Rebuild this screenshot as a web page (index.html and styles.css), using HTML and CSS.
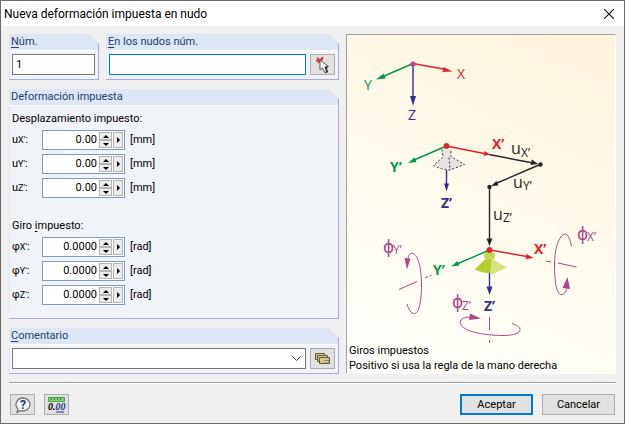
FILE: index.html
```html
<!DOCTYPE html>
<html lang="es">
<head>
    <meta charset="UTF-8">
    <meta name="viewport" content="width=device-width, initial-scale=1.0">
    <title>Nueva deformación impuesta en nudo</title>
    <link rel="stylesheet" href="styles.css">
</head>
<body>
    <header class="titlebar">
        <h1>Nueva deformación impuesta en nudo</h1>
        <button class="close-button" type="button" aria-label="Cerrar">
            <svg width="10" height="10" viewBox="0 0 10 10"><path d="M0 0L10 10M10 0L0 10" stroke="#111" stroke-width="1.1"/></svg>
        </button>
    </header>

    <form class="dialog">
        <main class="content">
            <div class="left">
                <div class="top-row">
                    <section class="group group-num">
                        <label class="group-title" for="num"><u>N</u>úm.</label>
                        <div class="group-body field-row">
                            <input class="text-input" type="text" id="num" value="1">
                        </div>
                    </section>
                    <section class="group group-nodes">
                        <label class="group-title" for="nodes"><u>E</u>n los nudos núm.</label>
                        <div class="group-body field-row">
                            <input class="text-input focused" type="text" id="nodes">
                            <button class="icon-button" type="button" aria-label="Seleccionar nudos">
                                <svg width="18" height="18" viewBox="0 0 18 18">
                                    <path d="M3 2L8 6M9 1L4 7M2 5L9 3" stroke="#e02b35" stroke-width="1.8"/>
                                    <path d="M6 4L6 14L8.500 12L11 17L13.500 16L11 11L14.500 10.500Z" fill="#fff" stroke="#555" stroke-width="1"/>
                                    <path d="M11 11L14 10.500L13 13L14 16L12 17" fill="#333"/>
                                </svg>
                            </button>
                        </div>
                    </section>
                </div>

                <section class="group group-main">
                    <h2 class="group-title">Deformación impuesta</h2>
                    <div class="group-body">
                        <p class="sub-title">Desplazamiento impuesto:</p>
                        <div class="value-row">
                            <label for="ux">u<small>X'</small>:</label>
                            <div class="spin">
                                <input type="text" id="ux" value="0.00">
                                <div class="spin-arrows"><button class="up" type="button" aria-label="Más"></button><button class="down" type="button" aria-label="Menos"></button></div>
                                <button class="more" type="button" aria-label="Opciones"></button>
                            </div>
                            <span>[mm]</span>
                        </div>
                        <div class="value-row">
                            <label for="uy">u<small>Y'</small>:</label>
                            <div class="spin">
                                <input type="text" id="uy" value="0.00">
                                <div class="spin-arrows"><button class="up" type="button" aria-label="Más"></button><button class="down" type="button" aria-label="Menos"></button></div>
                                <button class="more" type="button" aria-label="Opciones"></button>
                            </div>
                            <span>[mm]</span>
                        </div>
                        <div class="value-row">
                            <label for="uz">u<small>Z'</small>:</label>
                            <div class="spin">
                                <input type="text" id="uz" value="0.00">
                                <div class="spin-arrows"><button class="up" type="button" aria-label="Más"></button><button class="down" type="button" aria-label="Menos"></button></div>
                                <button class="more" type="button" aria-label="Opciones"></button>
                            </div>
                            <span>[mm]</span>
                        </div>

                        <p class="sub-title sub-title-giro">Giro <u>i</u>mpuesto:</p>
                        <div class="value-row">
                            <label for="px">φ<small>X'</small>:</label>
                            <div class="spin">
                                <input type="text" id="px" value="0.0000">
                                <div class="spin-arrows"><button class="up" type="button" aria-label="Más"></button><button class="down" type="button" aria-label="Menos"></button></div>
                                <button class="more" type="button" aria-label="Opciones"></button>
                            </div>
                            <span>[rad]</span>
                        </div>
                        <div class="value-row">
                            <label for="py">φ<small>Y'</small>:</label>
                            <div class="spin">
                                <input type="text" id="py" value="0.0000">
                                <div class="spin-arrows"><button class="up" type="button" aria-label="Más"></button><button class="down" type="button" aria-label="Menos"></button></div>
                                <button class="more" type="button" aria-label="Opciones"></button>
                            </div>
                            <span>[rad]</span>
                        </div>
                        <div class="value-row">
                            <label for="pz">φ<small>Z'</small>:</label>
                            <div class="spin">
                                <input type="text" id="pz" value="0.0000">
                                <div class="spin-arrows"><button class="up" type="button" aria-label="Más"></button><button class="down" type="button" aria-label="Menos"></button></div>
                                <button class="more" type="button" aria-label="Opciones"></button>
                            </div>
                            <span>[rad]</span>
                        </div>
                    </div>
                </section>

                <section class="group">
                    <label class="group-title" for="comment"><u>C</u>omentario</label>
                    <div class="group-body field-row">
                        <select class="combo" id="comment"><option></option></select>
                        <button class="icon-button" type="button" aria-label="Lista de comentarios">
                            <svg width="17" height="14" viewBox="0 0 17 14">
                                <g fill="#d8c98f" stroke="#5f5634">
                                    <path d="M1.500 1.500h9v6h-9z"/>
                                    <path d="M3.500 3.500h10v6h-10z"/>
                                    <path d="M5.500 5.500h10v6h-10z"/>
                                </g>
                                <path d="M11 12V8.500h4.500z" fill="#fff" stroke="#5f5634" stroke-width=".7"/>
                            </svg>
                        </button>
                    </div>
                </section>
            </div>

            <figure class="preview">
                <svg class="diagram" viewBox="347 35 268 308">
                    <!-- global axes -->
                    <g class="green"><path class="line" d="M413 63.500L383 76.500"/><path d="M376 79.500L383.500 73.500L385.500 78.500Z"/></g>
                    <g class="red"><path class="line" d="M413 63.500L446 69.500"/><path d="M452.500 71.500L443.500 67L442.500 72Z"/></g>
                    <g class="blue"><path class="line" d="M413 63.500V98"/><path d="M413 105.500L410 96H416Z"/></g>
                    <circle class="violet" cx="413" cy="64" r="2.600"/>
                    <g class="axis">
                        <text class="green" x="364" y="90">Y</text>
                        <text class="red" x="457" y="79">X</text>
                        <text class="blue" x="408" y="120">Z</text>
                    </g>

                    <!-- original support -->
                    <path class="ghost" d="M442 149.500L443 157L433.500 165.500Q441 169.500 450 170L464.500 164.500L451 156.500L451 149.500M449 157.500L450 170"/>
                    <g class="green"><path class="line" d="M446.500 146L414 160"/><path d="M408 163L414.500 157.500L416.500 162Z"/></g>
                    <g class="blue"><path class="line" d="M446.500 170V185"/><path d="M446.500 191.500L444 183.500H449Z"/></g>
                    <g class="dark">
                        <path class="line" d="M489 154.500L533 163"/><path d="M538 164L532 159.500L530.500 165Z"/>
                        <path class="line" d="M540 164.500L496 183.500"/><path d="M491 186L496.500 181L498.500 185.500Z"/>
                        <path class="line" d="M489.500 187V240"/><path d="M489.500 246L486.500 238.500H492.500Z"/>
                        <circle cx="540.500" cy="164.500" r="2.200"/>
                        <circle cx="489.500" cy="187" r="2.200"/>
                    </g>
                    <g class="red"><path class="line" d="M446.500 146L484 153.500"/><path d="M490 154.500L484.500 151L483.500 156Z"/><circle cx="446.500" cy="146" r="2.900"/></g>
                    <g class="axis bold">
                        <text class="green" x="390" y="172">Y’</text>
                        <text class="red" x="492" y="149">X’</text>
                        <text class="blue" x="441" y="208">Z’</text>
                    </g>
                    <g class="dark">
                        <text class="big" x="511" y="154">u</text><text class="sub" x="521" y="157">X’</text>
                        <text class="big" x="513" y="188">u</text><text class="sub" x="523" y="190">Y’</text>
                        <text class="big" x="493" y="220">u</text><text class="sub" x="503" y="222">Z’</text>
                    </g>

                    <!-- displaced support -->
                    <circle cx="489.500" cy="256" r="5.300" fill="#c4d850"/>
                    <path d="M485 259.500L474.500 269.500Q482 273 491 273.500L492 259.500Z" fill="#b5cf30"/>
                    <path d="M491.500 258.500L507 267.500L493 274L490.500 273.500Z" fill="#d6e47f"/>
                    <g class="green"><path class="line" d="M489.500 250L457 264"/><path d="M451 266.500L457.500 261L459.500 265.500Z"/></g>
                    <g class="red"><path class="line" d="M489.500 250L527 256.500"/><path d="M533.500 258L526.500 254L525.500 259Z"/><circle cx="489.500" cy="250" r="2.900"/></g>
                    <g class="blue"><path class="line" d="M489.500 273V288"/><path d="M489.500 295L486.500 286.500H492.500Z"/></g>
                    <g class="axis bold">
                        <text class="green" x="433" y="275">Y’</text>
                        <text class="red" x="534" y="254">X’</text>
                        <text class="blue" x="484" y="311">Z’</text>
                    </g>

                    <!-- rotations -->
                    <g class="violet">
                        <path class="arc" d="M408 258C409 254 411 253 413 253.500C418 255 421.500 268 421.500 284C421.500 302 419 313 414.500 313.500C411 314 408.500 309 407 304"/>
                        <path d="M407 269.500L404.500 258L410.500 258.500Z"/>
                        <path class="arc" d="M399 289.500L417 281.500M425 278L428 276.500M429.500 276L431.500 275"/>
                        <path class="arc" d="M571.500 246.500C570 239 568 234 565 234C559 235 554.500 249 554.500 264C554.500 282 556.500 294 561 294.500C564 295 566 292 567 288"/>
                        <path d="M567.500 277L570 289L562.500 288Z"/>
                        <path class="arc" d="M558 263L576.500 267M546 261L551 262"/>
                        <path class="arc" d="M471 317C463 317 459 320 460.500 324C463 331 483 335.500 503 335.500C514 335.500 521 333 520 329C519.500 326.500 516 325 512 323.500"/>
                        <path d="M481 318.500L470 313.500L469 320Z"/>
                        <path class="arc" d="M489.500 317V330M489.500 340V343"/>
                        <text class="phi" x="383" y="253">ϕ</text><text class="sub" x="393" y="254">Y’</text>
                        <text class="phi" x="577" y="240">ϕ</text><text class="sub" x="587" y="241">X’</text>
                        <text class="phi" x="452" y="308">ϕ</text><text class="sub" x="462" y="310">Z’</text>
                    </g>
                </svg>
                <figcaption>Giros impuestos<br>Positivo si usa la regla de la mano derecha</figcaption>
            </figure>
        </main>

        <footer class="footer">
            <button class="icon-button" type="button" aria-label="Ayuda">
                <svg width="18" height="18" viewBox="0 0 18 18">
                    <path d="M9 2a7 6.500 0 0 1 0 13q-1.500 0-2.500-.500L3 16.500l1-3.500A7 6.500 0 0 1 9 2z" fill="#f4f4f4" stroke="#777" stroke-width="1.300"/>
                    <text class="help-mark" x="6" y="13">?</text>
                </svg>
            </button>
            <button class="icon-button" type="button" aria-label="Unidades y decimales">
                <svg width="19" height="19" viewBox="0 0 19 19">
                    <path d="M1.500 2.500h16v4h-16z" fill="#86cf7d" stroke="#4da04c"/>
                    <path d="M4.500 3v2M7.500 3v2M10.500 3v2M13.500 3v2" stroke="#3b8a3b"/>
                    <text class="digits" x="1" y="15">0.<tspan fill="#26367e">00</tspan></text>
                    <path d="M9 17h8" stroke="#26367e"/>
                </svg>
            </button>
            <span class="spacer"></span>
            <button class="dialog-button default" type="button">Aceptar</button>
            <button class="dialog-button" type="button">Cancelar</button>
        </footer>
    </form>
</body>
</html>
```

FILE: styles.css
```css
* {
    box-sizing: border-box;
}
body {
    margin: 0;
    min-height: 100vh;
    display: flex;
    flex-direction: column;
    border: 1px solid #6b6b6b;
    background-color: #f0f0f0;
    color: #000;
    font-family: Roboto, "Liberation Sans", sans-serif;
    font-size: 11px;
    line-height: 14px;
}
h1, h2, p, figure {
    margin: 0;
    font-weight: normal;
}
input, select, button {
    margin: 0;
    padding: 0;
    border-radius: 0;
    font: inherit;
    color: inherit;
}
svg {
    display: block;
    fill: none;
}
u {
    text-underline-offset: 2px;
}

/* Title bar */
.titlebar {
    display: flex;
    align-items: center;
    justify-content: space-between;
    height: 25px;
    padding: 0 10px 0 3px;
    background-color: #fff;
}
.titlebar h1 {
    font-size: 12px;
}
.close-button {
    border: none;
    background: none;
}

.dialog {
    flex: 1;
    display: flex;
    flex-direction: column;
    padding: 8px 8px;
}
.content {
    flex: 1;
    display: grid;
    grid-template-columns: minmax(0, 330fr) minmax(0, 270fr);
    gap: 7px;
    padding-bottom: 8px;
}
.left {
    display: flex;
    flex-direction: column;
    gap: 9px;
}
.top-row {
    display: grid;
    grid-template-columns: minmax(0, 90fr) minmax(0, 233fr);
    gap: 7px;
}

/* Groups with the cut corner */
.group {
    border: solid #a6a6ec;
    border-width: 0 1px 1px 0;
    background-color: #f0f4f9;
    clip-path: polygon(0 0, calc(100% - 10px) 0, 100% 10px, 100% 100%, 0 100%);
}
.group-main {
    flex: 1;
}
.group-title {
    display: block;
    height: 17px;
    padding: 1px 2px;
    border-bottom: 1px solid #fff;
    background-color: #dce6f4;
    color: #1d3f6e;
    font-size: 11px;
}
.group-body {
    padding: 6px 2px;
    border-left: 1px solid #dce6f4;
}
.field-row {
    display: flex;
    gap: 4px;
    padding: 3px 3px 4px 2px;
}
.text-input, .combo {
    flex: 1;
    min-width: 0;
    height: 21px;
    padding: 0 3px;
    border: 1px solid #7a7a7a;
    background-color: #fff;
    outline: none;
}
.focused {
    border-color: #0078d7;
}
.combo {
    appearance: none;
    background: #fff url("data:image/svg+xml,%3Csvg xmlns='http://www.w3.org/2000/svg' width='9' height='6'%3E%3Cpath d='M.5 .5L4.500 4.500L8.500 .5' fill='none' stroke='%23444'/%3E%3C/svg%3E") no-repeat right 4px center;
}
.icon-button {
    display: flex;
    align-items: center;
    justify-content: center;
    width: 25px;
    height: 21px;
    border: 1px solid #adadad;
    background-color: #e1e1e1;
}

/* Value rows */
.sub-title-giro {
    margin-top: 21px;
}
.value-row {
    display: flex;
    align-items: center;
    margin-top: 4px;
}
.value-row label {
    width: 30px;
}
.value-row small {
    font-size: 9px;
}
.spin {
    display: flex;
    gap: 1px;
    width: 83px;
    height: 20px;
    margin-right: 5px;
    padding: 1px;
    border: 1px solid #7f9db9;
    background-color: #fff;
}
.spin input {
    flex: 1;
    min-width: 0;
    padding-right: 1px;
    border: none;
    background: none;
    text-align: right;
    outline: none;
}
.spin-arrows {
    display: flex;
    flex-direction: column;
    width: 13px;
}
.spin button {
    display: flex;
    align-items: center;
    justify-content: center;
    flex: 1;
    border: 1px solid #b4b4b4;
    background-color: #ececec;
}
.spin button.more {
    flex: none;
    width: 10px;
}
.up::before, .down::before, .more::before {
    content: "";
    border: solid transparent;
}
.up::before {
    border-width: 0 3px 3px;
    border-bottom-color: #000;
}
.down::before {
    border-width: 3px 3px 0;
    border-top-color: #000;
}
.more::before {
    border-width: 3px 0 3px 3px;
    border-left-color: #000;
}

/* Preview */
.preview {
    border: 1px solid #a0a0a0;
    border-right-color: #fff;
    border-bottom-color: #fff;
    background: linear-gradient(205deg, #fff4dc 0%, #fff8e8 35%, #fffdf2 65%, #fffffc 100%);
}
.diagram {
    width: 100%;
    font-family: "Open Sans", "Noto Sans", sans-serif;
}
.preview figcaption {
    padding-left: 2px;
    line-height: 15px;
}
.green { fill: #009a4b; stroke: #009a4b; }
.red { fill: #e6202a; stroke: #e6202a; }
.blue { fill: #35308b; stroke: #35308b; }
.dark { fill: #262626; stroke: #262626; }
.violet { fill: #b0488c; stroke: #b0488c; }
.diagram path, .diagram circle {
    stroke-width: 0;
}
.diagram .line {
    stroke-width: 1.4px;
}
.diagram .arc {
    fill: none;
    stroke-width: 1px;
}
.diagram .ghost {
    fill: #e3e3e3;
    stroke: #333;
    stroke-width: 1px;
    stroke-dasharray: 2 2;
}
.diagram text {
    stroke: none;
}
.axis {
    font-size: 14px;
}
.bold {
    font-weight: bold;
}
.big {
    font-size: 16px;
}
.sub {
    font-size: 12px;
}
.phi {
    font-family: "DejaVu Sans", sans-serif;
    font-size: 17px;
}

/* Footer */
.footer {
    display: flex;
    gap: 9px;
    padding: 11px 1px 0;
    border-top: 1px solid #a0a0a0;
    box-shadow: inset 0 1px #fff;
}
.spacer {
    flex: 1;
}
.dialog-button {
    width: 73px;
    height: 21px;
    border: 1px solid #adadad;
    background-color: #e1e1e1;
}
.default {
    border: 2px solid #0078d7;
}
.help-mark {
    fill: #26367e;
    font-size: 12px;
    font-weight: bold;
}
.digits {
    fill: #000;
    font: italic bold 10px "Liberation Serif", serif;
}
```
